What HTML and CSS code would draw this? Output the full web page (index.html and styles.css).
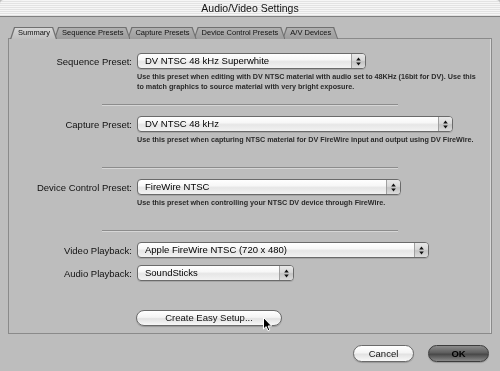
FILE: index.html
```html
<!DOCTYPE html>
<html>
<head>
<meta charset="utf-8">
<link rel="stylesheet" href="styles.css">
</head>
<body>
<div class="window">
  <div class="titlebar">Audio/Video Settings</div>
  <div class="tabs">
    <div class="tab tab-active">Summary</div>
    <div class="tab">Sequence Presets</div>
    <div class="tab">Capture Presets</div>
    <div class="tab">Device Control Presets</div>
    <div class="tab">A/V Devices</div>
  </div>
  <div class="panel">
    <div class="field field-first">
      <span class="lbl">Sequence Preset:</span>
      <div class="popup popup-seq"><span class="popup-text">DV NTSC 48 kHz Superwhite</span><span class="popup-arrows"><svg width="5" height="9" viewBox="0 0 5 9"><path d="M2.5 0.5 L4.8 3.5 L0.2 3.5Z M2.5 8.5 L4.8 5.5 L0.2 5.5Z" fill="#111"/></svg></span></div>
    </div>
    <p class="desc">Use this preset when editing with DV NTSC material with audio set to 48KHz (16bit for DV). Use this<br>to match graphics to source material with very bright exposure.</p>
    <div class="sep"></div>
    <div class="field">
      <span class="lbl">Capture Preset:</span>
      <div class="popup popup-cap"><span class="popup-text">DV NTSC 48 kHz</span><span class="popup-arrows"><svg width="5" height="9" viewBox="0 0 5 9"><path d="M2.5 0.5 L4.8 3.5 L0.2 3.5Z M2.5 8.5 L4.8 5.5 L0.2 5.5Z" fill="#111"/></svg></span></div>
    </div>
    <p class="desc">Use this preset when capturing NTSC material for DV FireWire input and output using DV FireWire.</p>
    <div class="sep"></div>
    <div class="field">
      <span class="lbl">Device Control Preset:</span>
      <div class="popup popup-dev"><span class="popup-text">FireWire NTSC</span><span class="popup-arrows"><svg width="5" height="9" viewBox="0 0 5 9"><path d="M2.5 0.5 L4.8 3.5 L0.2 3.5Z M2.5 8.5 L4.8 5.5 L0.2 5.5Z" fill="#111"/></svg></span></div>
    </div>
    <p class="desc">Use this preset when controlling your NTSC DV device through FireWire.</p>
    <div class="sep"></div>
    <div class="field">
      <span class="lbl">Video Playback:</span>
      <div class="popup popup-vid"><span class="popup-text">Apple FireWire NTSC (720 x 480)</span><span class="popup-arrows"><svg width="5" height="9" viewBox="0 0 5 9"><path d="M2.5 0.5 L4.8 3.5 L0.2 3.5Z M2.5 8.5 L4.8 5.5 L0.2 5.5Z" fill="#111"/></svg></span></div>
    </div>
    <div class="field field-audio">
      <span class="lbl">Audio Playback:</span>
      <div class="popup popup-aud"><span class="popup-text">SoundSticks</span><span class="popup-arrows"><svg width="5" height="9" viewBox="0 0 5 9"><path d="M2.5 0.5 L4.8 3.5 L0.2 3.5Z M2.5 8.5 L4.8 5.5 L0.2 5.5Z" fill="#111"/></svg></span></div>
    </div>
    <div class="easy-row">
      <button class="btn btn-easy">Create Easy Setup...</button>
    </div>
  </div>
  <div class="actions">
    <button class="btn btn-cancel">Cancel</button>
    <button class="btn btn-ok">OK</button>
  </div>
  <svg class="cursor" width="11" height="16" viewBox="0 0 11 16"><path d="M1.5 1.5 L1.5 13 L4.2 10.6 L6 14.8 L7.8 14 L6.1 10 L9.6 10 Z" fill="#000" stroke="#fff" stroke-width="1" stroke-linejoin="round"/></svg>
</div>
</body>
</html>
```
FILE: styles.css
```css
html, body {
  margin: 0;
  padding: 0;
}
body {
  background: #bdbdbd;
  font-family: "Liberation Sans", Arial, sans-serif;
  color: #000;
  width: 500px;
  height: 371px;
  overflow: hidden;
}
.window {
  position: relative;
  height: 371px;
  filter: grayscale(1);
}
.titlebar {
  height: 16px;
  line-height: 16px;
  border-bottom: 1px solid #808080;
  text-align: center;
  font-size: 10.5px;
  color: #111;
  background: repeating-linear-gradient(#f6f6f6 0 1px, #e3e3e3 1px 2px);
  border-top-left-radius: 4px;
  border-top-right-radius: 4px;
}
.tabs {
  display: flex;
  margin: 10px 0 -1px 10px;
  height: 12px;
  position: relative;
  z-index: 2;
}
.tab {
  position: relative;
  height: 12px;
  line-height: 12px;
  padding: 0 7px 0 8px;
  margin-right: -3px;
  font-size: 7.5px;
  color: #111;
  white-space: nowrap;
}
.tab::before,
.tab::after {
  content: "";
  position: absolute;
  clip-path: polygon(4px 0, calc(100% - 4px) 0, 100% 100%, 0 100%);
  z-index: -1;
}
.tab::before {
  inset: 0;
  background: #707070;
}
.tab::after {
  inset: 1px 1px 0 1px;
  background: linear-gradient(#b0b0b0, #9c9c9c);
}
.tab-active::after {
  inset: 1px 1px -1px 1px;
  background: linear-gradient(#d6d6d6, #bdbdbd);
}
.tab:nth-child(1) { z-index: 6; }
.tab:nth-child(2) { z-index: 5; }
.tab:nth-child(3) { z-index: 4; }
.tab:nth-child(4) { z-index: 3; }
.tab:nth-child(5) { z-index: 2; }
.panel {
  position: relative;
  z-index: 1;
  box-sizing: border-box;
  height: 296px;
  margin: 0 8px;
  border: 1px solid #8a8a8a;
  box-shadow: inset -1px 0 0 #d8d8d8;
  padding-top: 14px;
}
.field {
  display: flex;
  align-items: center;
  height: 16px;
}
.field-audio {
  margin-top: 7px;
}
.lbl {
  width: 123px;
  padding-right: 5px;
  text-align: right;
  font-size: 9.5px;
  color: #111;
  white-space: nowrap;
}
.popup {
  box-sizing: border-box;
  height: 16px;
  display: flex;
  border: 1px solid #6a6a6a;
  border-radius: 4px;
  background: linear-gradient(#ffffff, #f7f7f7 40%, #e6e6e6 55%, #f2f2f2 100%);
  box-shadow: 0 1px 0 rgba(0,0,0,0.12);
}
.popup-seq { width: 229px; }
.popup-cap { width: 316px; }
.popup-dev { width: 264px; }
.popup-vid { width: 292px; }
.popup-aud { width: 157px; }
.popup-text {
  flex: 1;
  padding-left: 7px;
  font-size: 9.5px;
  line-height: 14px;
  white-space: nowrap;
  overflow: hidden;
}
.popup-arrows {
  width: 13px;
  display: flex;
  align-items: center;
  justify-content: center;
  border-left: 1px solid #a0a0a0;
  border-radius: 0 3px 3px 0;
  background: linear-gradient(#e8e8e8, #d8d8d8 45%, #c4c4c4 55%, #dcdcdc);
}
.desc {
  margin: 3px 0 0 128px;
  height: 20px;
  font-size: 7.2px;
  font-weight: bold;
  line-height: 10px;
  color: #2a2a2a;
  white-space: nowrap;
}
.sep {
  margin: 12px 0 10px 93px;
  width: 296px;
  height: 1px;
  background: #8c8c8c;
  border-bottom: 1px solid #d6d6d6;
}
.easy-row {
  margin-top: 26px;
  padding-left: 127px;
}
.btn {
  box-sizing: border-box;
  border: 1px solid #6a6a6a;
  border-radius: 9px;
  background: linear-gradient(#ffffff, #f4f4f4 45%, #e2e2e2 55%, #f8f8f8);
  font-family: "Liberation Sans", Arial, sans-serif;
  font-size: 9.5px;
  color: #111;
  padding: 0;
  box-shadow: 0 1px 1px rgba(0,0,0,0.2);
}
.btn-easy {
  width: 146px;
  height: 16px;
}
.actions {
  display: flex;
  justify-content: flex-end;
  gap: 14px;
  padding-right: 11px;
  margin-top: 11px;
}
.btn-cancel,
.btn-ok {
  width: 61px;
  height: 17px;
}
.btn-ok {
  border-color: #3c3c3c;
  background: linear-gradient(#8c8c8c, #5e5e5e 45%, #484848 55%, #8a8a8a);
  font-weight: bold;
  color: #000;
}
.cursor {
  position: absolute;
  left: 262px;
  top: 316px;
  z-index: 5;
}
```
